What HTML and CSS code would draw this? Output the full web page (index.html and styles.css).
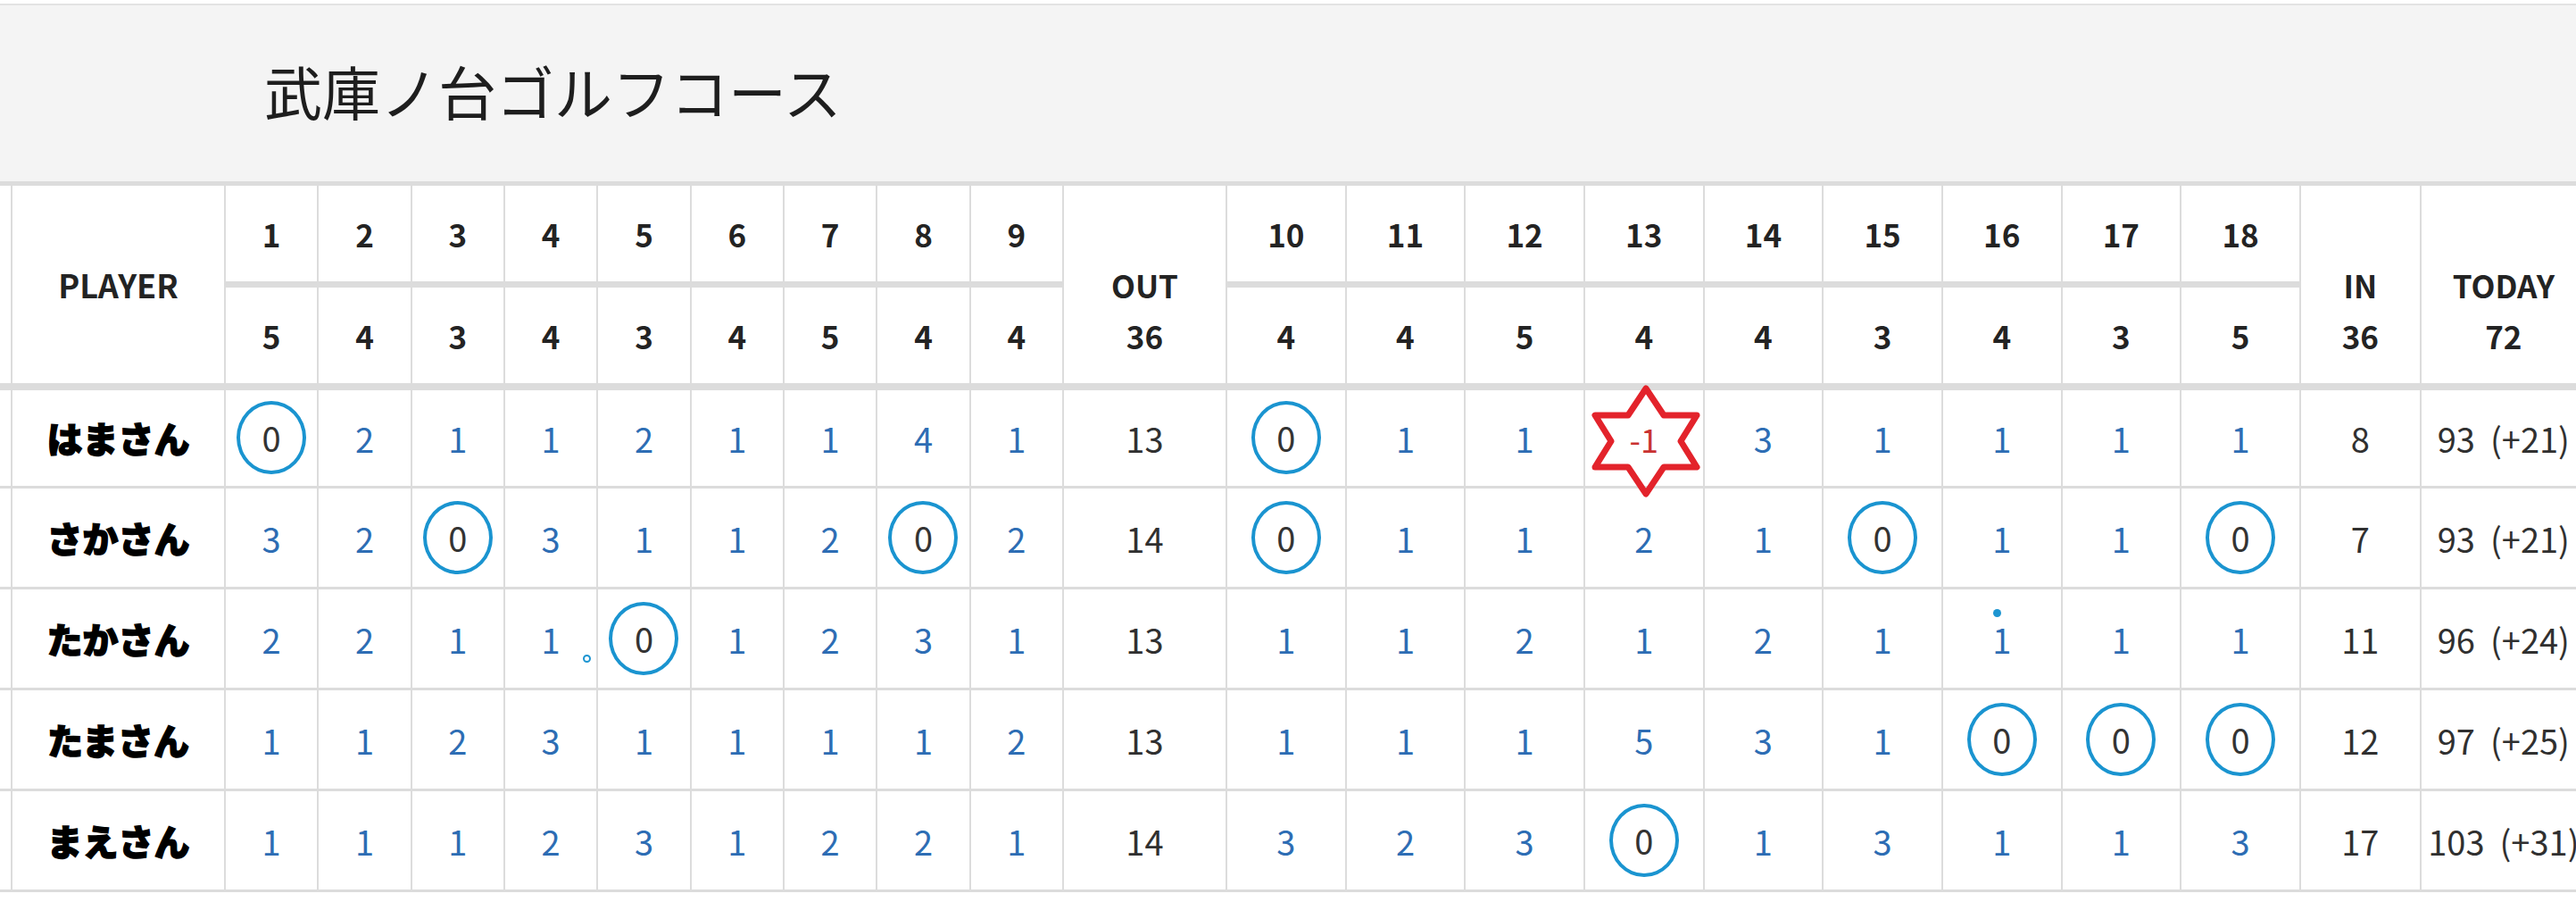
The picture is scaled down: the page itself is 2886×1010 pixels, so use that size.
FILE: index.html
```html
<!DOCTYPE html>
<html lang="ja">
<head>
<meta charset="utf-8">
<title>武庫ノ台ゴルフコース</title>
<link rel="stylesheet" href="styles.css">
</head>
<body>
<div class="title-bar"><h1 class="title">武庫ノ台ゴルフコース</h1></div>
<table class="card">
<colgroup>
<col class="c-sp"><col class="c-pl">
<col class="c-f"><col class="c-f"><col class="c-f"><col class="c-f"><col class="c-f"><col class="c-f"><col class="c-f"><col class="c-f"><col class="c-f">
<col class="c-out">
<col class="c-b"><col class="c-b"><col class="c-b"><col class="c-b"><col class="c-b"><col class="c-b"><col class="c-b"><col class="c-b"><col class="c-b">
<col class="c-in"><col class="c-td">
</colgroup>
<thead>
<tr class="h1">
<th class="span edge" rowspan="2"></th>
<th class="span player" rowspan="2">PLAYER</th>
<th class="hole">1</th><th class="hole">2</th><th class="hole">3</th><th class="hole">4</th><th class="hole">5</th><th class="hole">6</th><th class="hole">7</th><th class="hole">8</th><th class="hole">9</th>
<th class="span" rowspan="2"><div class="stack">OUT<br>36</div></th>
<th class="hole">10</th><th class="hole">11</th><th class="hole">12</th><th class="hole">13</th><th class="hole">14</th><th class="hole">15</th><th class="hole">16</th><th class="hole">17</th><th class="hole">18</th>
<th class="span" rowspan="2"><div class="stack">IN<br>36</div></th>
<th class="span" rowspan="2"><div class="stack">TODAY<br>72</div></th>
</tr>
<tr class="h2">
<th>5</th><th>4</th><th>3</th><th>4</th><th>3</th><th>4</th><th>5</th><th>4</th><th>4</th>
<th>4</th><th>4</th><th>5</th><th>4</th><th>4</th><th>3</th><th>4</th><th>3</th><th>5</th>
</tr>
</thead>
<tbody>
<tr>
<td class="edge"></td><td class="name">はまさん</td>
<td class="s"><span class="ring">0</span></td><td class="s">2</td><td class="s">1</td><td class="s">1</td><td class="s">2</td><td class="s">1</td><td class="s">1</td><td class="s">4</td><td class="s">1</td>
<td class="t">13</td>
<td class="s"><span class="ring">0</span></td><td class="s">1</td><td class="s">1</td>
<td class="s star-cell"><svg class="star" width="140" height="140" viewBox="0 0 140 140"><polygon points="70,10 90,40 127,40 109,69 127,98 90,98 70,128 50,98 13,98 31,69 13,40 50,40" fill="none" stroke="#e3232b" stroke-width="7" stroke-linejoin="round"/></svg><span class="neg">-1</span></td>
<td class="s">3</td><td class="s">1</td><td class="s">1</td><td class="s">1</td><td class="s">1</td>
<td class="t">8</td><td class="t today">93&nbsp;&nbsp;(+21)</td>
</tr>
<tr>
<td class="edge"></td><td class="name">さかさん</td>
<td class="s">3</td><td class="s">2</td><td class="s"><span class="ring">0</span></td><td class="s">3</td><td class="s">1</td><td class="s">1</td><td class="s">2</td><td class="s"><span class="ring">0</span></td><td class="s">2</td>
<td class="t">14</td>
<td class="s"><span class="ring">0</span></td><td class="s">1</td><td class="s">1</td><td class="s">2</td><td class="s">1</td><td class="s"><span class="ring">0</span></td><td class="s">1</td><td class="s">1</td><td class="s"><span class="ring">0</span></td>
<td class="t">7</td><td class="t today">93&nbsp;&nbsp;(+21)</td>
</tr>
<tr>
<td class="edge"></td><td class="name">たかさん</td>
<td class="s">2</td><td class="s">2</td><td class="s">1</td><td class="s mark">1<span class="stray-ring"></span></td><td class="s"><span class="ring">0</span></td><td class="s">1</td><td class="s">2</td><td class="s">3</td><td class="s">1</td>
<td class="t">13</td>
<td class="s">1</td><td class="s">1</td><td class="s">2</td><td class="s">1</td><td class="s">2</td><td class="s">1</td><td class="s mark">1<span class="stray-dot"></span></td><td class="s">1</td><td class="s">1</td>
<td class="t">11</td><td class="t today">96&nbsp;&nbsp;(+24)</td>
</tr>
<tr>
<td class="edge"></td><td class="name">たまさん</td>
<td class="s">1</td><td class="s">1</td><td class="s">2</td><td class="s">3</td><td class="s">1</td><td class="s">1</td><td class="s">1</td><td class="s">1</td><td class="s">2</td>
<td class="t">13</td>
<td class="s">1</td><td class="s">1</td><td class="s">1</td><td class="s">5</td><td class="s">3</td><td class="s">1</td><td class="s"><span class="ring">0</span></td><td class="s"><span class="ring">0</span></td><td class="s"><span class="ring">0</span></td>
<td class="t">12</td><td class="t today">97&nbsp;&nbsp;(+25)</td>
</tr>
<tr>
<td class="edge"></td><td class="name">まえさん</td>
<td class="s">1</td><td class="s">1</td><td class="s">1</td><td class="s">2</td><td class="s">3</td><td class="s">1</td><td class="s">2</td><td class="s">2</td><td class="s">1</td>
<td class="t">14</td>
<td class="s">3</td><td class="s">2</td><td class="s">3</td><td class="s"><span class="ring">0</span></td><td class="s">1</td><td class="s">3</td><td class="s">1</td><td class="s">1</td><td class="s">3</td>
<td class="t">17</td><td class="t today">103&nbsp;&nbsp;(+31)</td>
</tr>
</tbody>
</table>
</body>
</html>
```

FILE: styles.css
```css
html, body {
  margin: 0;
  padding: 0;
  overflow: hidden;
  background: #ffffff;
}
body {
  width: 2886px;
  height: 1010px;
  font-family: "Noto Sans CJK JP", "Noto Sans", sans-serif;
  color: #222;
}
.title-bar {
  box-sizing: border-box;
  margin-top: 4px;
  height: 199px;
  border-top: 2px solid #e3e3e3;
  background: #f4f4f4;
  display: flex;
  align-items: center;
  padding-left: 296px;
  padding-bottom: 8px;
}
.title {
  margin: 0;
  font-size: 65px;
  font-weight: 400;
  color: #1e1e1e;
  line-height: 1.2;
}
.card {
  border-collapse: collapse;
  table-layout: fixed;
  width: 2898px;
}
.c-sp { width: 13px; }
.c-pl { width: 239px; }
.c-f { width: 104.33px; }
.c-out { width: 183px; }
.c-b { width: 133.67px; }
.c-in { width: 135px; }
.c-td { width: 186px; }

.card th, .card td {
  border: 2px solid #dcdcdc;
  padding: 0;
  text-align: center;
  vertical-align: middle;
  white-space: nowrap;
}
.card .edge { border-left: none; }
.card th {
  font-size: 35px;
  font-weight: 700;
  color: #232323;
  line-height: 1;
}
.h1 th { border-top: 5px solid #dcdcdc; }
.h1 th.hole { border-bottom: 7px solid #dcdcdc; }
.h1 th.span, .h2 th { border-bottom: 8px solid #dcdcdc; }
.h1 { height: 113px; }
.h2 { height: 114px; }
.card th.player { font-size: 36px; }
.stack {
  padding-top: 57px;
  line-height: 57px;
}
.card tbody tr { height: 113px; }
.card tbody td { border-bottom: 3px solid #dcdcdc; }

.name {
  font-size: 40px;
  font-weight: 900;
  color: #000;
  -webkit-text-stroke: 1.4px #000;
  padding-top: 10px;
}
.s {
  font-size: 38px;
  font-weight: 400;
  color: #2d6db4;
  position: relative;
}
.t {
  font-size: 38px;
  font-weight: 400;
  color: #303030;
}
.ring {
  box-sizing: border-box;
  display: inline-flex;
  align-items: center;
  justify-content: center;
  width: 78px;
  height: 82px;
  border: 4.5px solid #1a94d0;
  border-radius: 50%;
  color: #333;
  vertical-align: middle;
  line-height: 1;
}
.star-cell { position: relative; }
.star {
  position: absolute;
  left: 50%;
  top: -12px;
  margin-left: -68px;
}
.neg {
  position: relative;
  color: #c93232;
  font-size: 36px;
}
.mark { position: relative; }
.stray-ring {
  position: absolute;
  left: 87px;
  top: 73px;
  width: 9px;
  height: 9px;
  box-sizing: border-box;
  border: 2px solid #1d95d1;
  border-radius: 50%;
}
.stray-dot {
  position: absolute;
  left: 56px;
  top: 22px;
  width: 9px;
  height: 9px;
  border-radius: 50%;
  background: #1d95d1;
}
```
